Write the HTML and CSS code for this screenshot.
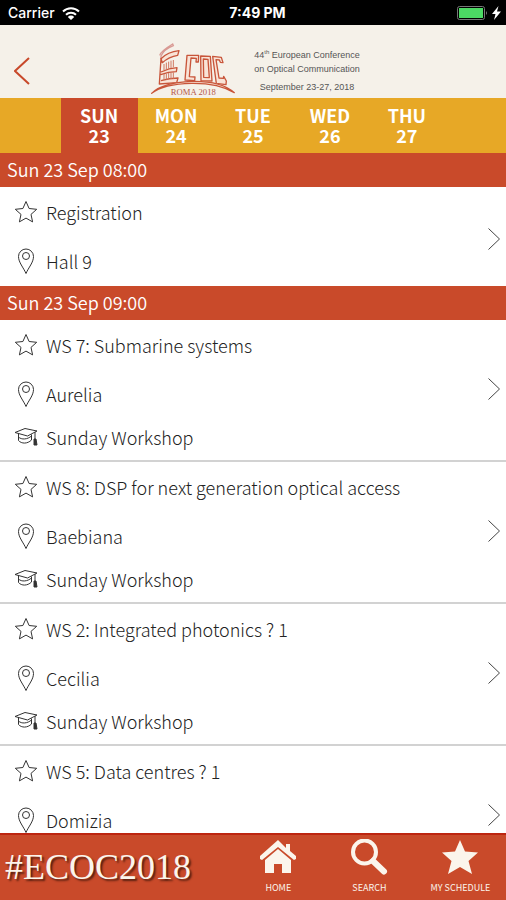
FILE: index.html
```html
<!DOCTYPE html>
<html lang="en">
<head>
<meta charset="utf-8">
<meta name="viewport" content="width=device-width, initial-scale=1">
<title>ECOC 2018 Programme</title>
<link rel="stylesheet" href="styles.css">
</head>
<body>
<svg class="sprite" aria-hidden="true">
  <symbol id="star" viewBox="0 0 24 24"><path d="M12 1.500l3.100 7 7.600.8-5.700 5.100 1.600 7.500-6.600-3.800-6.600 3.800L7 14.400 1.300 9.300l7.600-.8z"/></symbol>
  <symbol id="pin" viewBox="0 0 24 28"><path d="M12 26.500C9.500 20.500 4.500 15.500 4.500 9.500a7.500 7.500 0 0 1 15 0c0 6-5 11-7.500 17z"/><circle cx="12" cy="9" r="3.500"/></symbol>
  <symbol id="cap" viewBox="0 0 24 20"><path d="M1 5.500L11 1.500l12 2.500-9.500 5zM4.500 7v6.500c3 3.500 9 3.500 13-.5V7.500M4.500 10c3 3 9 2.500 13-1M21 5v8"/><path d="M20 12h2l1 6h-3z" class="solid"/></symbol>
  <symbol id="next" viewBox="0 0 14 24"><path d="M1.500 1.500l11 10.500-11 10.500"/></symbol>
</svg>
<div class="app">
  <div class="status">
    <div class="carrier">
      <span>Carrier</span>
      <svg class="wifi" viewBox="0 0 18 13" aria-hidden="true"><path d="M1 4.500a11.500 11.500 0 0 1 16 0M4 7.800a7 7 0 0 1 10 0"/><path class="dot" d="M9 13L5.800 9.900a4.600 4.600 0 0 1 6.400 0z"/></svg>
    </div>
    <span class="time">7:49 PM</span>
    <div class="power">
      <svg class="battery" viewBox="0 0 31 14" aria-hidden="true"><rect class="case" x=".5" y=".5" width="27" height="13" rx="2"/><rect class="charge" x="2" y="2" width="24" height="10"/><path class="knob" d="M29 5q2 2 0 4z"/></svg>
      <svg class="bolt" viewBox="0 0 9 14" aria-hidden="true"><path d="M6.500 0L0 8h3.500L2 14l7-8.500H5z"/></svg>
    </div>
  </div>

  <header class="banner">
    <button class="back" type="button" aria-label="Back"><svg viewBox="0 0 16 28" aria-hidden="true"><path d="M15 1L1 14l14 13"/></svg></button>
    <div class="brand">
      <svg class="logo" viewBox="36 36 256 174" role="img" aria-label="ECOC Roma 2018">
        <g class="faint"><path d="M64 76q4-13 39-34l2 5Q77 58 68 78M68 78v10"/></g>
        <g class="mark">
          <path d="M68 86Q88 66 122 62l-4 14Q92 80 72 98zM68 86l-5 76 52-4 4-14Q92 145 68 152M68 126q24-12 48-13l-2 12q-23 0-47 9"/>
          <path d="M146 76h35l-1 20h-7l1-11-16-1-5 56 17 1-1 11-29-2z"/>
          <path d="M187 78l29 1 5 74-33-1zM195 87l14 1 4 55-17-1z"/>
          <path d="M223 79l26 3 5 16-8-1-3-7-10-1 9 55 13 1 1-6 8 14-1 11-29-4z"/>
          <path d="M40 190Q70 158 160 154q88-2 128 34Q240 159 160 160 75 162 40 190z"/>
        </g>
        <g class="cols"><path d="M77 120v-18M84 118V98M91 116V95M98 114V92M105 112V90M77 150v-18M84 149v-18M91 148v-19M98 147v-19M105 146v-19"/></g>
        <text x="165" y="196">ROMA 2018</text>
      </svg>
      <div class="tagline">
        <span>44<sup>th</sup> European Conference</span>
        <span>on Optical Communication</span>
        <span class="dates">September 23-27, 2018</span>
      </div>
    </div>
  </header>

  <nav class="days" aria-label="Days">
    <button type="button" class="day current" aria-current="date">SUN<br>23</button>
    <button type="button" class="day">MON<br>24</button>
    <button type="button" class="day">TUE<br>25</button>
    <button type="button" class="day">WED<br>26</button>
    <button type="button" class="day">THU<br>27</button>
  </nav>

  <main class="programme">
    <h2 class="slot">Sun 23 Sep 08:00</h2>
    <ul class="sessions">
      <li class="session short">
        <div class="details">
          <div class="row"><button class="fav" type="button" aria-label="Add to my schedule"><svg class="icon"><use href="#star"/></svg></button><span>Registration</span></div>
          <div class="row"><svg class="icon pin"><use href="#pin"/></svg><span>Hall 9</span></div>
        </div>
        <a class="open" href="#registration" aria-label="Open Registration"><svg><use href="#next"/></svg></a>
      </li>
    </ul>
    <h2 class="slot">Sun 23 Sep 09:00</h2>
    <ul class="sessions">
      <li class="session">
        <div class="details">
          <div class="row"><button class="fav" type="button" aria-label="Add to my schedule"><svg class="icon"><use href="#star"/></svg></button><span>WS 7: Submarine systems</span></div>
          <div class="row"><svg class="icon pin"><use href="#pin"/></svg><span>Aurelia</span></div>
          <div class="row type"><svg class="icon cap"><use href="#cap"/></svg><span>Sunday Workshop</span></div>
        </div>
        <a class="open" href="#ws7" aria-label="Open WS 7"><svg><use href="#next"/></svg></a>
      </li>
      <li class="session">
        <div class="details">
          <div class="row"><button class="fav" type="button" aria-label="Add to my schedule"><svg class="icon"><use href="#star"/></svg></button><span>WS 8: DSP for next generation optical access</span></div>
          <div class="row"><svg class="icon pin"><use href="#pin"/></svg><span>Baebiana</span></div>
          <div class="row type"><svg class="icon cap"><use href="#cap"/></svg><span>Sunday Workshop</span></div>
        </div>
        <a class="open" href="#ws8" aria-label="Open WS 8"><svg><use href="#next"/></svg></a>
      </li>
      <li class="session">
        <div class="details">
          <div class="row"><button class="fav" type="button" aria-label="Add to my schedule"><svg class="icon"><use href="#star"/></svg></button><span>WS 2: Integrated photonics ? 1</span></div>
          <div class="row"><svg class="icon pin"><use href="#pin"/></svg><span>Cecilia</span></div>
          <div class="row type"><svg class="icon cap"><use href="#cap"/></svg><span>Sunday Workshop</span></div>
        </div>
        <a class="open" href="#ws2" aria-label="Open WS 2"><svg><use href="#next"/></svg></a>
      </li>
      <li class="session">
        <div class="details">
          <div class="row"><button class="fav" type="button" aria-label="Add to my schedule"><svg class="icon"><use href="#star"/></svg></button><span>WS 5: Data centres ? 1</span></div>
          <div class="row"><svg class="icon pin"><use href="#pin"/></svg><span>Domizia</span></div>
        </div>
        <a class="open" href="#ws5" aria-label="Open WS 5"><svg><use href="#next"/></svg></a>
      </li>
    </ul>
  </main>

  <footer class="dock">
    <span class="hashtag">#ECOC2018</span>
    <a class="tool" href="#home"><svg viewBox="0 0 38 36" aria-hidden="true"><path d="M19 1L1 17v3l2 1L19 8l16 13 2-1v-3l-6-5V5h-4v4z"/><path d="M19 10L6 21v13h9v-9h8v9h9V21z"/></svg>HOME</a>
    <a class="tool" href="#search"><svg viewBox="0 0 38 36" aria-hidden="true"><circle class="lens" cx="14.500" cy="13" r="11.500"/><path class="handle" d="M23 22l11 10.500"/></svg>SEARCH</a>
    <a class="tool" href="#schedule"><svg viewBox="0 0 38 36" aria-hidden="true"><path d="M19 1l5 11.500 13 1-9.500 8.500L31 35l-12-7-12 7 3.500-13L1 13.500l13-1z"/></svg>MY SCHEDULE</a>
  </footer>
</div>
</body>
</html>
```
FILE: styles.css
```css
* { box-sizing: border-box; }
body {
  margin: 0;
  font-family: "Noto Sans CJK SC", "Noto Sans", sans-serif;
  color: #222;
  background: #fff;
}
button {
  padding: 0;
  border: 0;
  background: none;
  font: inherit;
  color: inherit;
}
a { color: inherit; text-decoration: none; }
ul { list-style: none; margin: 0; padding: 0; }
svg { display: block; fill: none; }
.sprite { display: none; }

.app { display: flex; flex-direction: column; height: 100vh; }

.status {
  display: grid;
  grid-template-columns: 1fr auto 1fr;
  align-items: center;
  height: 25px;
  padding: 1px 5px 0 8px;
  background: #000;
  color: #fff;
  font: 14px/16px Inter, sans-serif;
}
.carrier { display: flex; align-items: center; gap: 7px; }
.carrier span { font-weight: 500; }
.wifi { width: 18px; height: 13px; stroke: #fff; stroke-width: 2; }
.wifi .dot { fill: #fff; stroke: none; }
.time { padding-left: 6px; font-weight: 700; }
.power { display: flex; align-items: center; justify-content: flex-end; gap: 4px; }
.battery { width: 31px; height: 14px; }
.case { stroke: #777; }
.charge { fill: #4cd964; }
.knob { fill: #777; }
.bolt { width: 9px; height: 14px; fill: #fff; }

.banner {
  display: grid;
  grid-template-columns: 1fr auto 1fr;
  height: 73px;
  background: #f5f1e9;
}
.back { justify-self: start; padding: 16px 14px 0; }
.back svg { width: 16px; height: 28px; stroke: #c8492a; stroke-width: 2; }
.brand { display: flex; gap: 18px; padding-left: 4px; }
.logo { width: 86px; height: 58px; margin-top: 17px; }
.logo .mark { fill: #f9e3d6; stroke: #c8553a; stroke-width: 4; stroke-linejoin: round; }
.logo .faint { stroke: #d99a94; stroke-width: 4; }
.logo .cols { stroke: #cf7660; stroke-width: 3; }
.logo text { font: 26px "Liberation Serif", serif; fill: #b5584a; text-anchor: middle; }
.tagline {
  display: flex;
  flex-direction: column;
  padding-top: 23px;
  font: 9px/14px "Liberation Sans", sans-serif;
  color: #555;
}
.tagline sup { font-size: 6px; line-height: 0; }
.dates { padding-top: 4px; text-align: center; }

.days { display: flex; justify-content: center; height: 55px; background: #e7a826; }
.day {
  width: 15.2%;
  padding-bottom: 2px;
  color: #fff;
  font-size: 18px;
  font-weight: 700;
  line-height: 20px;
}
.current { background: #c94a2a; }

.programme { flex: 1; min-height: 0; overflow: hidden; }
.slot {
  height: 34px;
  margin: 0;
  padding-left: 7px;
  background: #c94a2a;
  color: #fff;
  font-size: 18px;
  font-weight: 350;
  line-height: 32px;
}
.session {
  display: flex;
  align-items: center;
  min-height: 142px;
  border-bottom: 2px solid #d2d2d2;
}
.short { min-height: 99px; border-bottom: 0; }
.details { flex: 1; align-self: flex-start; }
.row {
  display: flex;
  align-items: center;
  gap: 8px;
  height: 49px;
  padding-left: 14px;
  font-size: 18px;
  font-weight: 300;
  line-height: 28px;
}
.type { height: 38px; }
.icon { width: 24px; height: 24px; stroke: #333; }
.pin { height: 28px; }
.cap { height: 20px; }
.solid { fill: #333; }
.open { padding: 5px 5px 8px; }
.short .open { padding-top: 12px; }
.open svg { width: 14px; height: 24px; stroke: #444; }

.dock {
  display: flex;
  height: 67px;
  border-top: 2px solid #bd2510;
  background: #c94a2a;
  color: #fbf5ec;
}
.hashtag {
  flex: 1;
  padding-left: 5px;
  font: 36px/64px "Liberation Serif", serif;
  text-shadow: 2px 2px 2px #5a2010;
}
.tool {
  display: flex;
  flex-direction: column;
  align-items: center;
  gap: 6px;
  width: 18%;
  padding-top: 4px;
  font-size: 9px;
  line-height: 14px;
}
.tool svg { width: 38px; height: 36px; fill: #fbf5ec; }
.tool .lens { fill: none; stroke: #fbf5ec; stroke-width: 4; }
.tool .handle { stroke: #fbf5ec; stroke-width: 6; stroke-linecap: round; }
```
